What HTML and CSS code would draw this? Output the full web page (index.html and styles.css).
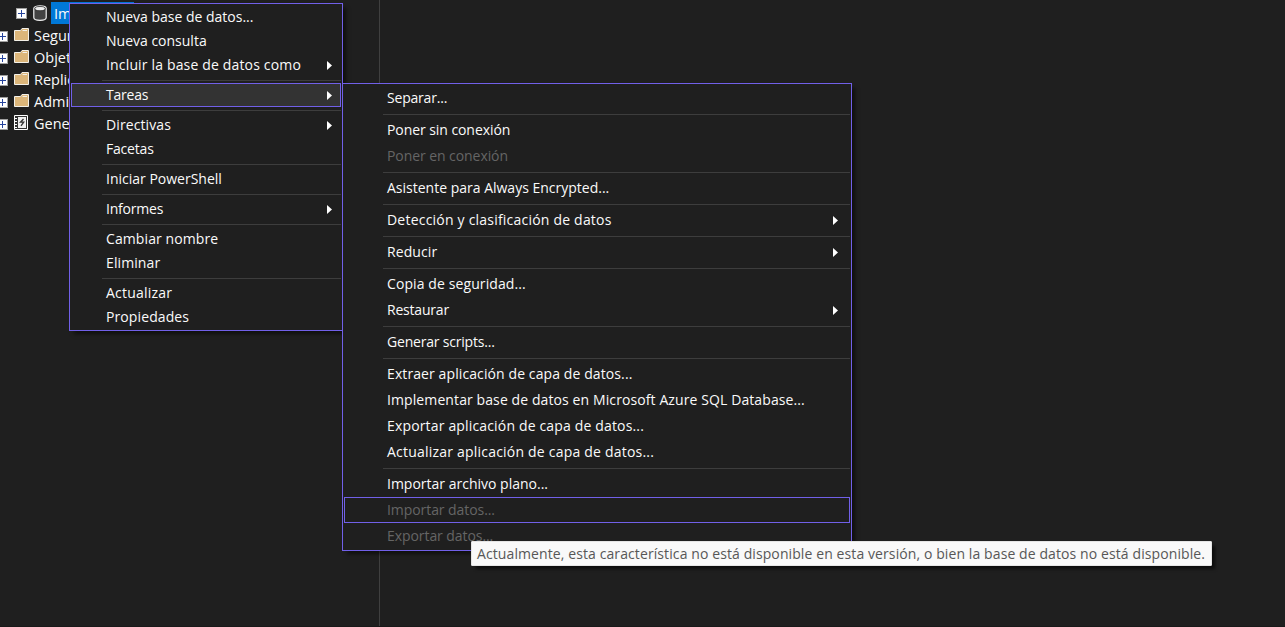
FILE: index.html
```
<!DOCTYPE html>
<html lang="es">
<head>
<meta charset="utf-8">
<title>Explorador de objetos</title>
<link rel="stylesheet" href="styles.css">
</head>
<body>
<svg width="0" height="0" class="defs">
  <symbol id="plus" viewBox="0 0 11 11"><rect x=".5" y=".5" width="10" height="10" fill="#fff" stroke="#a0a0a0"/><path d="M2 5.500h7M5.500 2v7" stroke="#26449c"/></symbol>
  <symbol id="folder" viewBox="0 0 15 13"><path d="M.5 2.500H6.500L8 .5h6.500v12H.5z" fill="#dcb67a" stroke="#f3f0e8"/><path d="M8.500 2.500h4.500" stroke="#f3f0e8"/></symbol>
  <symbol id="arrow" viewBox="0 0 5 9"><path d="M0 0L5 4.500 0 9z" fill="#fff"/></symbol>
</svg>
<main class="screen">
  <aside class="tree">
    <div class="node child"><svg class="plus"><use href="#plus"/></svg><svg class="db" viewBox="0 0 14 16"><path d="M.8 3.500C.8 0 13.200 0 13.200 3.500v9c0 3.800-12.400 3.800-12.400 0z" fill="#424242" stroke="#f0f0f0" stroke-width="1.200"/><ellipse cx="7" cy="3.600" rx="5.200" ry="2.100" fill="#f0f0f0" stroke="#222" stroke-width=".7"/></svg><span class="selected">Im</span></div>
    <div class="node"><svg class="plus"><use href="#plus"/></svg><svg class="folder"><use href="#folder"/></svg><span>Segur</span></div>
    <div class="node"><svg class="plus"><use href="#plus"/></svg><svg class="folder"><use href="#folder"/></svg><span>Objet</span></div>
    <div class="node"><svg class="plus"><use href="#plus"/></svg><svg class="folder"><use href="#folder"/></svg><span>Replic</span></div>
    <div class="node"><svg class="plus"><use href="#plus"/></svg><svg class="folder"><use href="#folder"/></svg><span>Admi</span></div>
    <div class="node"><svg class="plus"><use href="#plus"/></svg><svg class="log" viewBox="0 0 14 15"><path d="M.5.5h13v14H.5z" fill="#333" stroke="#fff"/><path d="M4 2h8v11H4z" fill="#f0f0f0"/><path d="M1 3.500h2M1 6.500h2M1 9.500h2M1 12.500h2" stroke="#fff"/><path d="M9.500 4L6.500 7.200h3.200L7 10.800" fill="none" stroke="#333" stroke-width="1.300"/></svg><span>Gene</span></div>
  </aside>

  <nav class="menu context">
    <div class="item"><span>Nueva base de datos...</span></div>
    <div class="item"><span>Nueva consulta</span></div>
    <div class="item"><span class="wide">Incluir la base de datos como</span><svg class="arrow"><use href="#arrow"/></svg></div>
    <hr>
    <div class="item active"><span class="tight">Tareas</span><svg class="arrow"><use href="#arrow"/></svg></div>
    <hr>
    <div class="item"><span class="snug">Directivas</span><svg class="arrow"><use href="#arrow"/></svg></div>
    <div class="item"><span class="tight">Facetas</span></div>
    <hr>
    <div class="item"><span>Iniciar PowerShell</span></div>
    <hr>
    <div class="item"><span class="tight">Informes</span><svg class="arrow"><use href="#arrow"/></svg></div>
    <hr>
    <div class="item"><span class="snug">Cambiar nombre</span></div>
    <div class="item"><span class="snug">Eliminar</span></div>
    <hr>
    <div class="item"><span class="wider">Actualizar</span></div>
    <div class="item"><span class="snug">Propiedades</span></div>
  </nav>

  <nav class="menu tasks">
    <div class="item"><span class="tight">Separar...</span></div>
    <hr>
    <div class="item"><span class="tight-slight">Poner sin conexión</span></div>
    <div class="item disabled"><span class="tight-slight">Poner en conexión</span></div>
    <hr>
    <div class="item"><span>Asistente para Always Encrypted...</span></div>
    <hr>
    <div class="item"><span class="wider">Detección y clasificación de datos</span><svg class="arrow"><use href="#arrow"/></svg></div>
    <hr>
    <div class="item"><span class="snug">Reducir</span><svg class="arrow"><use href="#arrow"/></svg></div>
    <hr>
    <div class="item"><span class="snug">Copia de seguridad...</span></div>
    <div class="item"><span class="tight">Restaurar</span><svg class="arrow"><use href="#arrow"/></svg></div>
    <hr>
    <div class="item"><span class="tight">Generar scripts...</span></div>
    <hr>
    <div class="item"><span class="snug">Extraer aplicación de capa de datos...</span></div>
    <div class="item"><span class="snug">Implementar base de datos en Microsoft Azure SQL Database...</span></div>
    <div class="item"><span class="wide">Exportar aplicación de capa de datos...</span></div>
    <div class="item"><span class="wider">Actualizar aplicación de capa de datos...</span></div>
    <hr>
    <div class="item"><span>Importar archivo plano...</span></div>
    <div class="item disabled focused"><span class="tight-slight">Importar datos...</span></div>
    <div class="item disabled"><span class="tight-slight">Exportar datos...</span></div>
  </nav>

  <div class="tooltip">Actualmente, esta característica no está disponible en esta versión, o bien la base de datos no está disponible.</div>
</main>
</body>
</html>
```
FILE: styles.css
```
* { box-sizing: border-box; }
body { margin: 0; background: #1f1f1f; color: #fafafa; font: 14px/22px "Open Sans", "Noto Sans", sans-serif; }
.defs { position: absolute; }
.screen { position: relative; width: 1285px; height: 627px; overflow: hidden; border-bottom: 1px solid #191919; }
.tree { width: 380px; height: 627px; padding-top: 2px; border-right: 1px solid #3f3f3f; overflow: hidden; }
.node { display: flex; align-items: center; height: 22px; margin-left: -3px; white-space: nowrap; font-size: 14.500px; }
.node + .node { padding-top: 1px; }
.child { margin-left: 16px; }
.plus { width: 11px; height: 11px; flex: none; margin-top: 1px; }
.folder { width: 15px; height: 13px; margin: 0 5px 2px 6px; flex: none; }
.log { width: 14px; height: 15px; margin: 0 6px 2px 6px; flex: none; }
.db { width: 14px; height: 16px; margin: 0 4px 0 6px; flex: none; }
.selected { width: 83px; height: 22px; padding: 1px 0 0 3px; background: #0078d7; }
.menu { position: absolute; background: #1f1f1f; border: 1px solid #7160e8; padding: 1px; box-shadow: 4px 4px 4px -1px rgba(0, 0, 0, .55); }
.context { left: 69px; top: 3px; width: 274px; }
.tasks { left: 342px; top: 83px; width: 510px; }
.item { display: flex; align-items: center; justify-content: space-between; height: 24px; padding: 0 8px 0 34px; border: 1px solid transparent; white-space: nowrap; }
.tasks .item { height: 26px; padding: 0 11px 0 42px; }
.item.active { background: #333; border-color: #7160e8; }
.item.focused { border-color: #7160e8; }
.item.disabled { color: #656565; }
.wider { letter-spacing: .21px; }
.wide { letter-spacing: .16px; }
.snug { letter-spacing: .1px; }
.tight-slight { letter-spacing: -.07px; }
.tight { letter-spacing: -.2px; }
.arrow { width: 5px; height: 9px; flex: none; }
hr { height: 1px; margin: 3px 0 2px 31px; border: 0; background: #3d3d3d; }
.tasks hr { margin-left: 39px; }
.tooltip { position: absolute; left: 471px; top: 541px; width: 741px; height: 25px; padding-left: 5px; border: 1px solid #e5e5e5; border-radius: 1px; background: #f9f9f9; color: #575757; line-height: 23px; letter-spacing: .098px; white-space: nowrap; box-shadow: 4px 4px 3px -1px rgba(0, 0, 0, .6); }
```
